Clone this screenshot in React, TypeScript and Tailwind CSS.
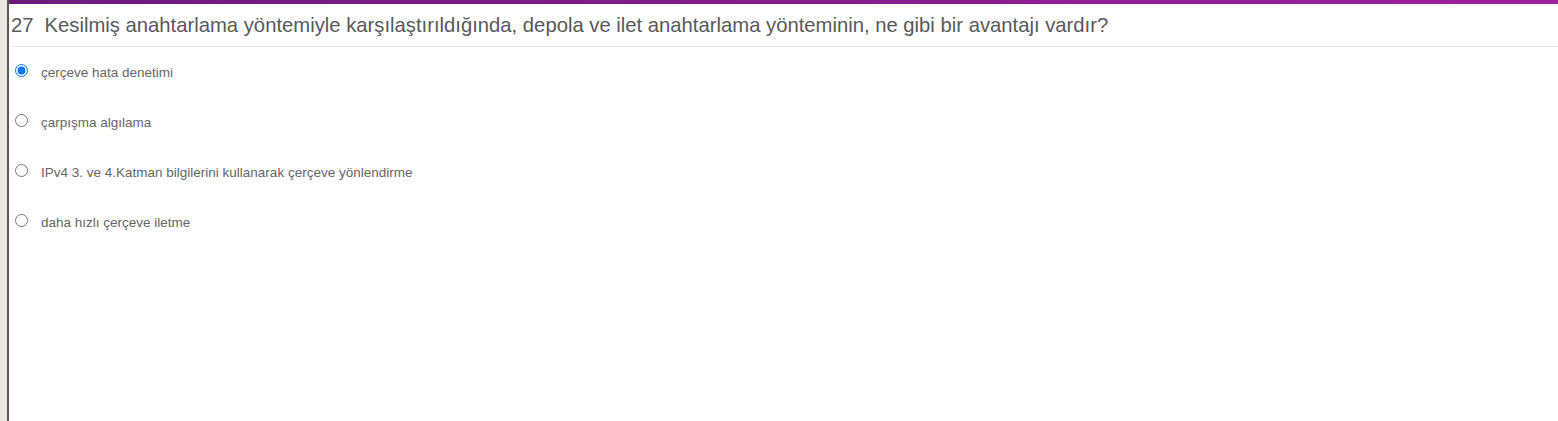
const options = [
	'çerçeve hata denetimi',
	'çarpışma algılama',
	'IPv4 3. ve 4.Katman bilgilerini kullanarak çerçeve yönlendirme',
	'daha hızlı çerçeve iletme',
]

export default function App() {
	return (
		<div className="flex h-[421px] w-full bg-white font-['Liberation_Sans',Arial,sans-serif]">
			<div className="w-[7px] shrink-0 bg-[#ebe9e4]" />
			<div className="w-[2px] shrink-0 bg-[#5a5a5a]" />
			<div className="flex min-w-0 flex-1 flex-col">
				<div className="h-[4px] bg-gradient-to-r from-[#6b1a7c] to-[#9d219c]" />
				<h2 className="flex h-[42px] items-center pl-[2px] text-[20.25px] leading-none text-[#595959]">
					<span>27</span>
					<span className="ml-[11px]">
						Kesilmiş anahtarlama yöntemiyle karşılaştırıldığında, depola ve ilet anahtarlama yönteminin, ne gibi bir avantajı vardır?
					</span>
				</h2>
				<div className="ml-[2px] h-px bg-[#e6e6e6]" />
				<div className="flex flex-col pt-[12px]">
					{options.map((option, i) => (
						<label key={option} className="flex h-[50px] items-start text-[13.5px] text-[#666]">
							<input
								type="radio"
								name="q27"
								defaultChecked={i === 0}
								className="ml-[6px] mt-[5px] h-[13px] w-[13px] accent-[#0075ff]"
							/>
							<span className="ml-[13px] mt-[6px] leading-[15px]">{option}</span>
						</label>
					))}
				</div>
			</div>
		</div>
	)
}
